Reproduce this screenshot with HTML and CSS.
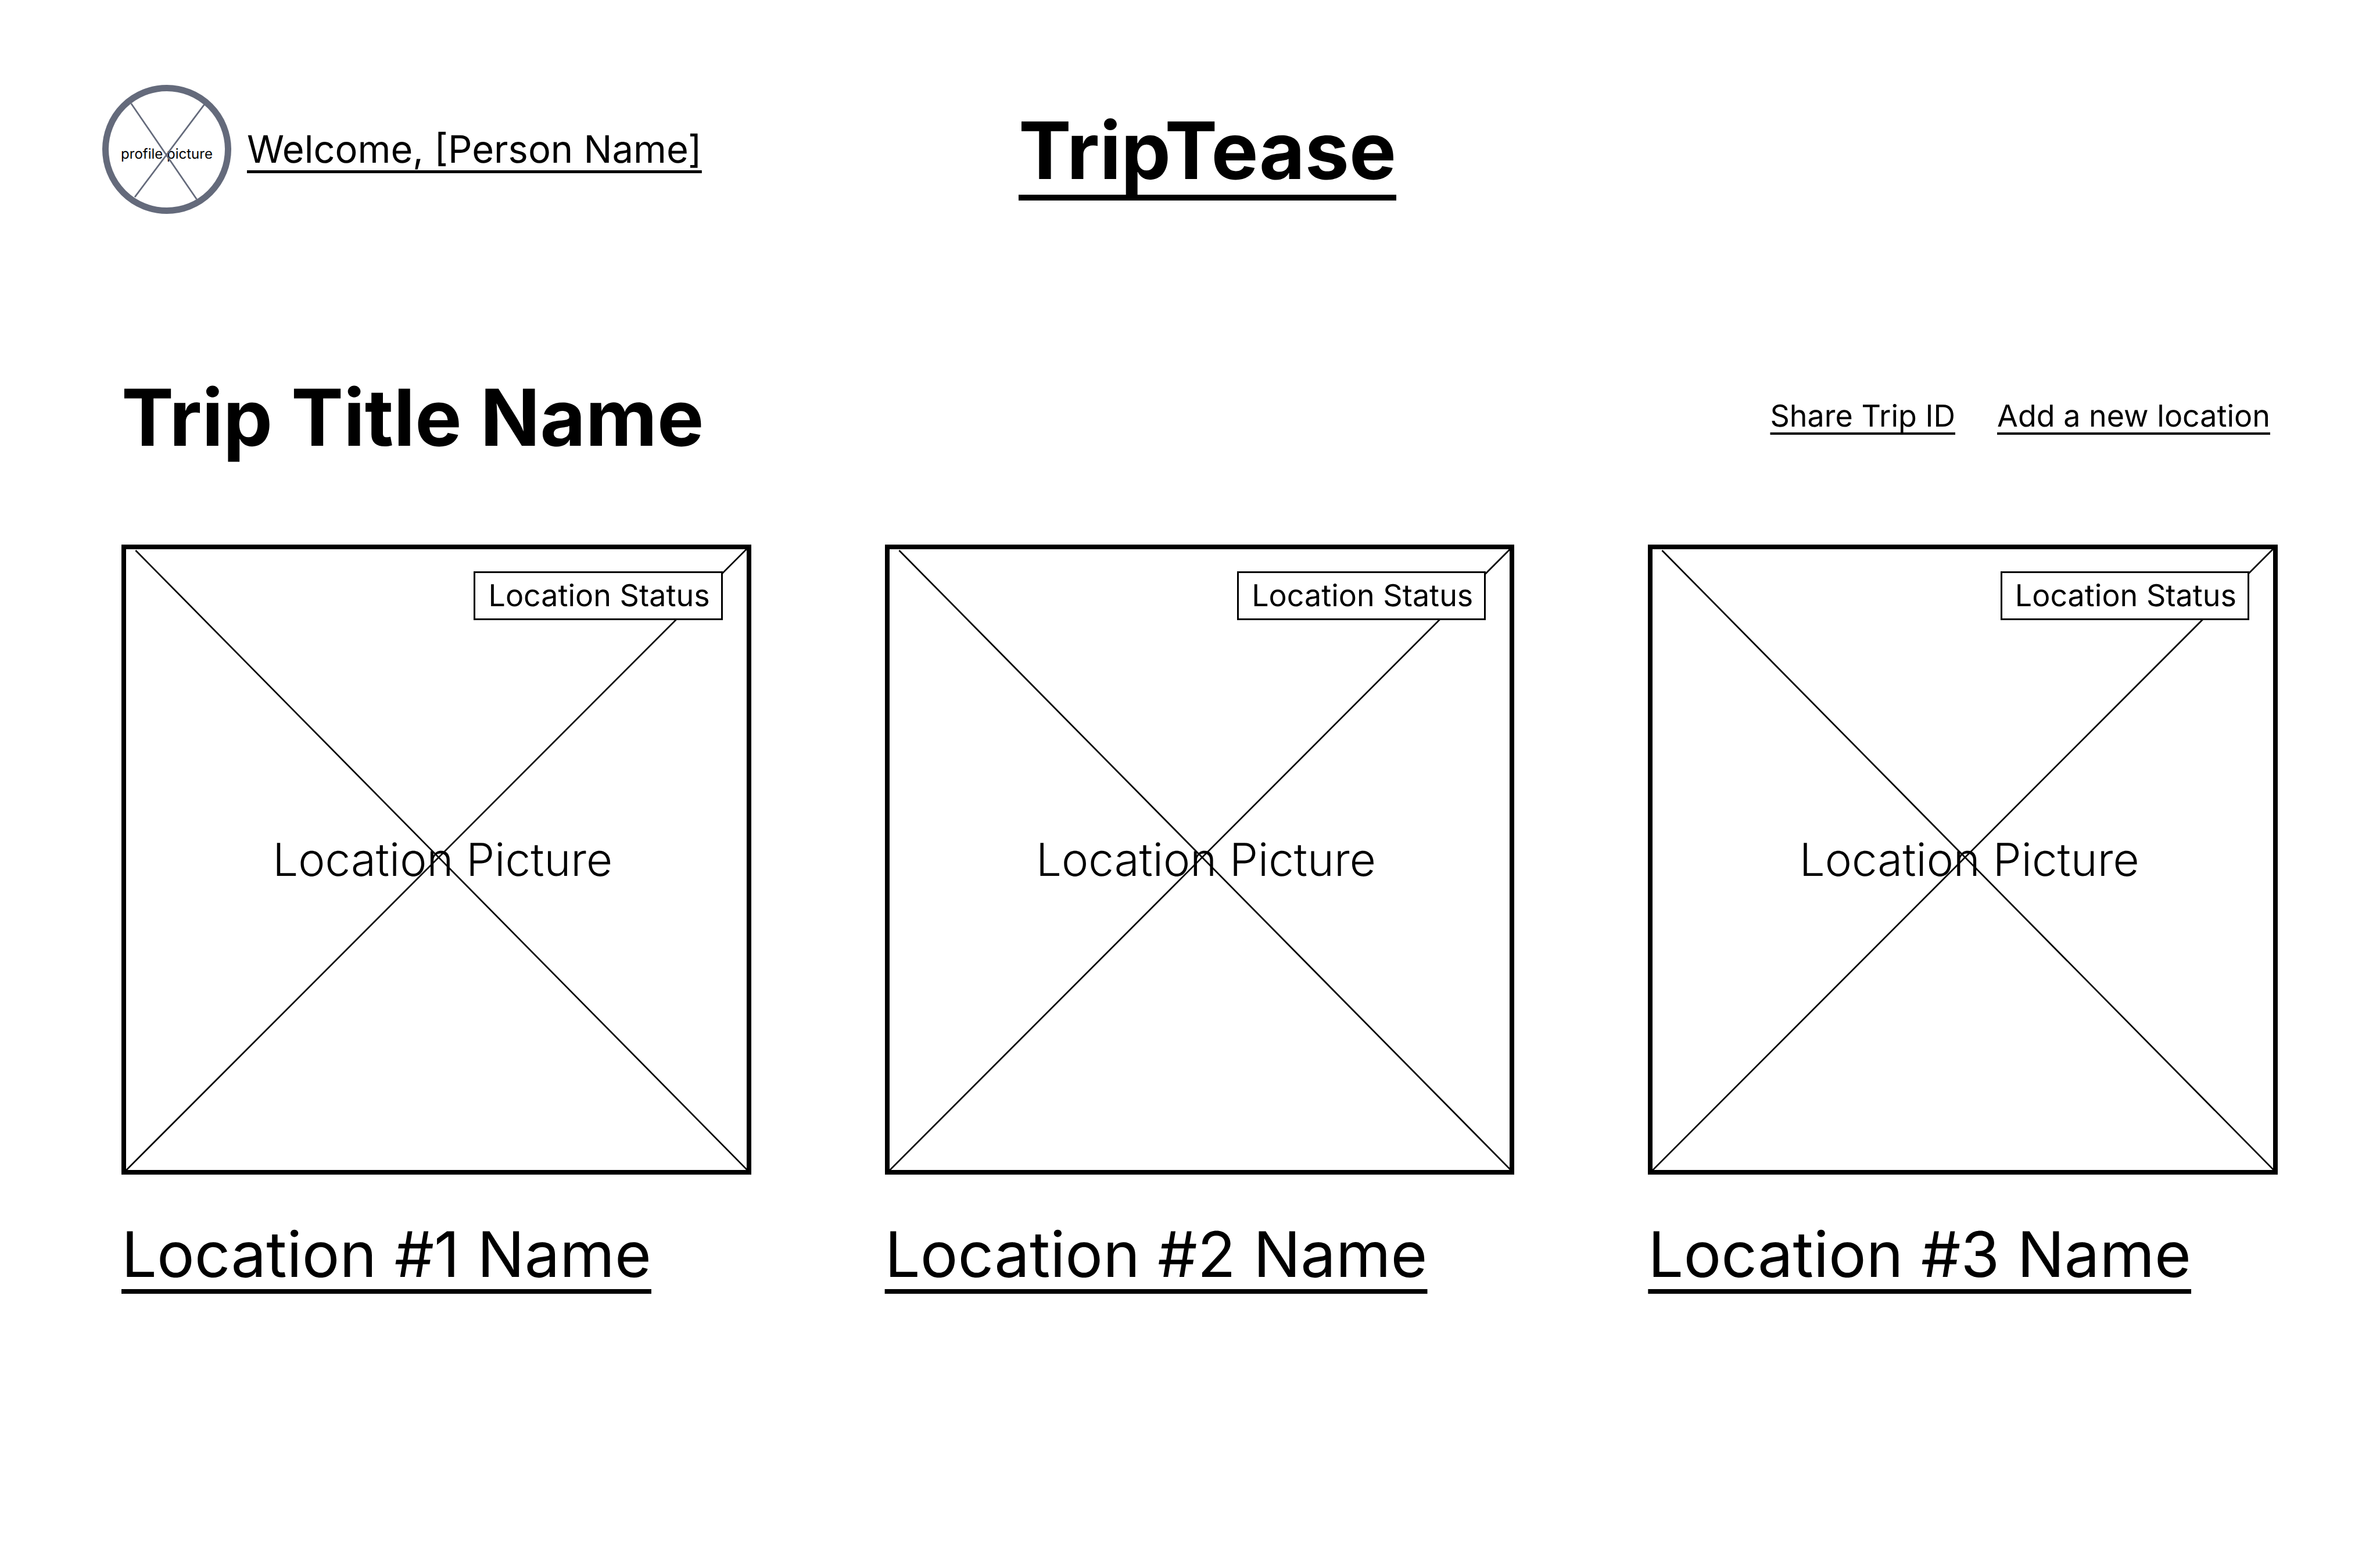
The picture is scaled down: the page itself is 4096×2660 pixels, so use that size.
FILE: index.html
```html
<!DOCTYPE html>
<html lang="en">
<head>
  <meta charset="utf-8">
  <meta name="viewport" content="width=device-width, initial-scale=1">
  <title>TripTease</title>
  <link rel="stylesheet" href="styles.css">
</head>
<body>
  <header class="site-header">
    <div class="profile">
      <div class="avatar">
        <span class="avatar-label">profile picture</span>
        <svg class="avatar-cross" viewBox="0 0 246 246" aria-hidden="true">
          <path d="M55 35.500L180 218M195 37L62 214"/>
        </svg>
      </div>
      <a class="link link-welcome" href="#profile">Welcome, [Person Name]</a>
    </div>
    <a class="link link-logo" href="#home">TripTease</a>
  </header>

  <main class="trip">
    <div class="trip-bar">
      <h1 class="trip-title">Trip Title Name</h1>
      <nav class="trip-actions">
        <a class="link link-action" href="#share">Share Trip ID</a>
        <a class="link link-action" href="#add">Add a new location</a>
      </nav>
    </div>

    <div class="locations">
      <article class="location">
        <div class="picture">
          <span class="picture-label">Location Picture</span>
          <svg class="picture-cross" viewBox="0 0 1200 1200" aria-hidden="true">
            <path d="M27 11L1200 1199M1198 2L1 1200"/>
          </svg>
          <span class="status">Location Status</span>
        </div>
        <h2 class="location-name"><a class="link link-location" href="#location-1">Location #1 Name</a></h2>
      </article>
      <article class="location">
        <div class="picture">
          <span class="picture-label">Location Picture</span>
          <svg class="picture-cross" viewBox="0 0 1200 1200" aria-hidden="true">
            <path d="M27 11L1200 1199M1198 2L1 1200"/>
          </svg>
          <span class="status">Location Status</span>
        </div>
        <h2 class="location-name"><a class="link link-location" href="#location-2">Location #2 Name</a></h2>
      </article>
      <article class="location">
        <div class="picture">
          <span class="picture-label">Location Picture</span>
          <svg class="picture-cross" viewBox="0 0 1200 1200" aria-hidden="true">
            <path d="M27 11L1200 1199M1198 2L1 1200"/>
          </svg>
          <span class="status">Location Status</span>
        </div>
        <h2 class="location-name"><a class="link link-location" href="#location-3">Location #3 Name</a></h2>
      </article>
    </div>
  </main>
</body>
</html>
```
FILE: styles.css
```css
*,
*::before,
*::after {
  box-sizing: border-box;
}

body {
  margin: 0;
  background: #fff;
  color: #000;
  font-family: Inter, "Liberation Sans", sans-serif;
  text-rendering: geometricPrecision;
}

h1,
h2 {
  margin: 0;
}

.link {
  color: inherit;
  text-decoration-line: underline;
  text-decoration-skip-ink: none;
  white-space: nowrap;
}

/* Header */
.site-header {
  display: grid;
  grid-template-columns: 1fr auto 1fr;
  align-items: center;
  padding: 146px 116px 0 176px;
}

.profile {
  display: flex;
  align-items: center;
  gap: 27px;
}

.avatar {
  position: relative;
  display: flex;
  flex: none;
  align-items: center;
  justify-content: center;
  width: 222px;
  height: 222px;
  padding-top: 16px;
  border: 11px solid #646a7b;
  border-radius: 50%;
}

.avatar-label {
  font-size: 24px;
  line-height: 28px;
  white-space: nowrap;
}

.avatar-cross {
  position: absolute;
  inset: -11px;
  fill: none;
  stroke: #646a7b;
  stroke-width: 3;
}

.link-welcome {
  font-size: 65px;
  line-height: 78px;
  text-decoration-thickness: 5px;
  text-underline-offset: 13px;
}

.link-logo {
  padding-top: 4px;
  font-size: 136px;
  font-weight: 700;
  line-height: 164px;
  text-decoration-thickness: 10px;
  text-underline-offset: 27px;
}

/* Trip */
.trip {
  padding: 268px 176px 0 209px;
}

.trip-bar {
  display: flex;
  align-items: center;
  justify-content: space-between;
  padding-right: 13px;
}

.trip-title {
  font-size: 135px;
  font-weight: 700;
  line-height: 164px;
}

.trip-actions {
  display: flex;
  gap: 72px;
  padding-bottom: 4px;
}

.link-action {
  font-size: 52px;
  line-height: 70px;
  text-decoration-thickness: 4px;
  text-underline-offset: 10px;
}

/* Location cards */
.locations {
  display: grid;
  grid-template-columns: repeat(3, 1fr);
  gap: 230px;
  padding-top: 137px;
}

.picture {
  position: relative;
  display: flex;
  align-items: center;
  justify-content: center;
  aspect-ratio: 1;
  padding-left: 22px;
  border: 8px solid #000;
}

.picture-label {
  font-size: 78px;
  font-weight: 300;
  line-height: 94px;
}

.picture-cross {
  position: absolute;
  inset: -8px;
  fill: none;
  stroke: #000;
  stroke-width: 3;
}

.status {
  position: absolute;
  top: 38px;
  right: 41px;
  padding: 4px 19px 4px 22px;
  border: 3px solid #000;
  background: #fff;
  font-size: 52px;
  line-height: 70px;
}

.location-name {
  padding-top: 63px;
  font-size: 108px;
  font-weight: 400;
  line-height: 150px;
}

.link-location {
  display: inline-block;
  text-decoration-thickness: 8px;
  text-underline-offset: 21px;
}
```
